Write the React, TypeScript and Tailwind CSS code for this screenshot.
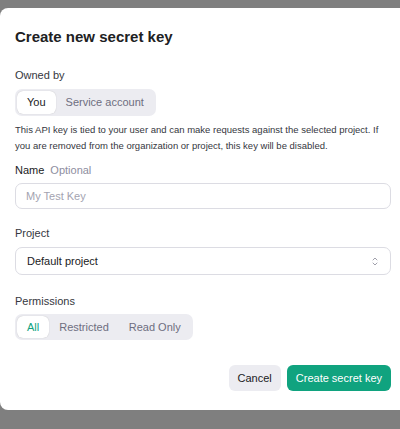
import { useState } from "react";

const font = { fontFamily: '"Liberation Sans", Arial, sans-serif' };

const Segmented = ({
  options,
  value,
  onChange,
  activeClass,
  height,
}: {
  options: string[];
  value: string;
  onChange: (v: string) => void;
  activeClass: string;
  height: string;
}) => (
  <div className={`inline-flex self-start rounded-[7px] bg-[#ececf1] p-[2px] ${height}`}>
    {options.map((opt) =>
      opt === value ? (
        <button
          key={opt}
          onClick={() => onChange(opt)}
          className={`rounded-[6px] bg-white px-[10px] text-[11px] shadow-[0_0_1px_rgba(0,0,0,0.25)] ${activeClass}`}
        >
          {opt}
        </button>
      ) : (
        <button
          key={opt}
          onClick={() => onChange(opt)}
          className="rounded-[6px] px-[10px] text-[11px] text-[#6e6e80]"
        >
          {opt}
        </button>
      )
    )}
  </div>
);

const App = () => {
  const [owner, setOwner] = useState("You");
  const [perm, setPerm] = useState("All");

  return (
    <div className="h-[429px] w-[400px] overflow-hidden bg-[#7f7f7f] pt-[8px]" style={font}>
      <div className="flex h-[402px] flex-col rounded-l-[8px] bg-white pb-[19px] pl-[15px] pr-[9px] pt-[20px] text-[#202123]">
        <h2 className="text-[15px] font-bold leading-[18px]">Create new secret key</h2>

        <div className="mt-[22px] text-[11px] leading-[14px] text-[#353740]">Owned by</div>
        <div className="mt-[7px] flex">
          <Segmented
            options={["You", "Service account"]}
            value={owner}
            onChange={setOwner}
            activeClass="text-[#202123]"
            height="h-[27px]"
          />
        </div>

        <p className="mt-[6px] text-[9.5px] leading-[16px] text-[#353740]">
          This API key is tied to your user and can make requests against the selected project. If
          you are removed from the organization or project, this key will be disabled.
        </p>

        <div className="mt-[9px] flex gap-[6px] text-[11px] leading-[14px]">
          <span className="text-[#202123]">Name</span>
          <span className="text-[#8e8ea0]">Optional</span>
        </div>
        <input
          placeholder="My Test Key"
          className="mt-[6px] h-[26px] w-full rounded-[7px] border border-[#dcdce3] px-[10px] text-[11px] text-[#202123] outline-none placeholder:text-[#a3a3b0]"
        />

        <div className="mt-[17px] text-[11px] leading-[14px] text-[#353740]">Project</div>
        <div className="mt-[7px] flex h-[28px] items-center justify-between rounded-[7px] border border-[#dcdce3] pl-[11px] pr-[12px]">
          <span className="text-[11px] text-[#202123]">Default project</span>
          <svg width="6" height="9" viewBox="0 0 6 9" fill="none" stroke="#a0a0ab" strokeWidth="1" strokeLinecap="round" strokeLinejoin="round">
            <path d="M1 3L3 1L5 3" />
            <path d="M1 6L3 8L5 6" />
          </svg>
        </div>

        <div className="mt-[19px] text-[11px] leading-[14px] text-[#353740]">Permissions</div>
        <div className="mt-[6px] flex">
          <Segmented
            options={["All", "Restricted", "Read Only"]}
            value={perm}
            onChange={setPerm}
            activeClass="text-[#10a37f]"
            height="h-[26px]"
          />
        </div>

        <div className="mt-[25px] flex justify-end gap-[6px]">
          <button className="h-[26px] rounded-[6px] bg-[#ececf1] px-[9px] text-[11px] text-[#202123]">
            Cancel
          </button>
          <button className="h-[26px] rounded-[6px] bg-[#10a37f] px-[9px] text-[11px] text-white">
            Create secret key
          </button>
        </div>
      </div>
    </div>
  );
};

export default App;
